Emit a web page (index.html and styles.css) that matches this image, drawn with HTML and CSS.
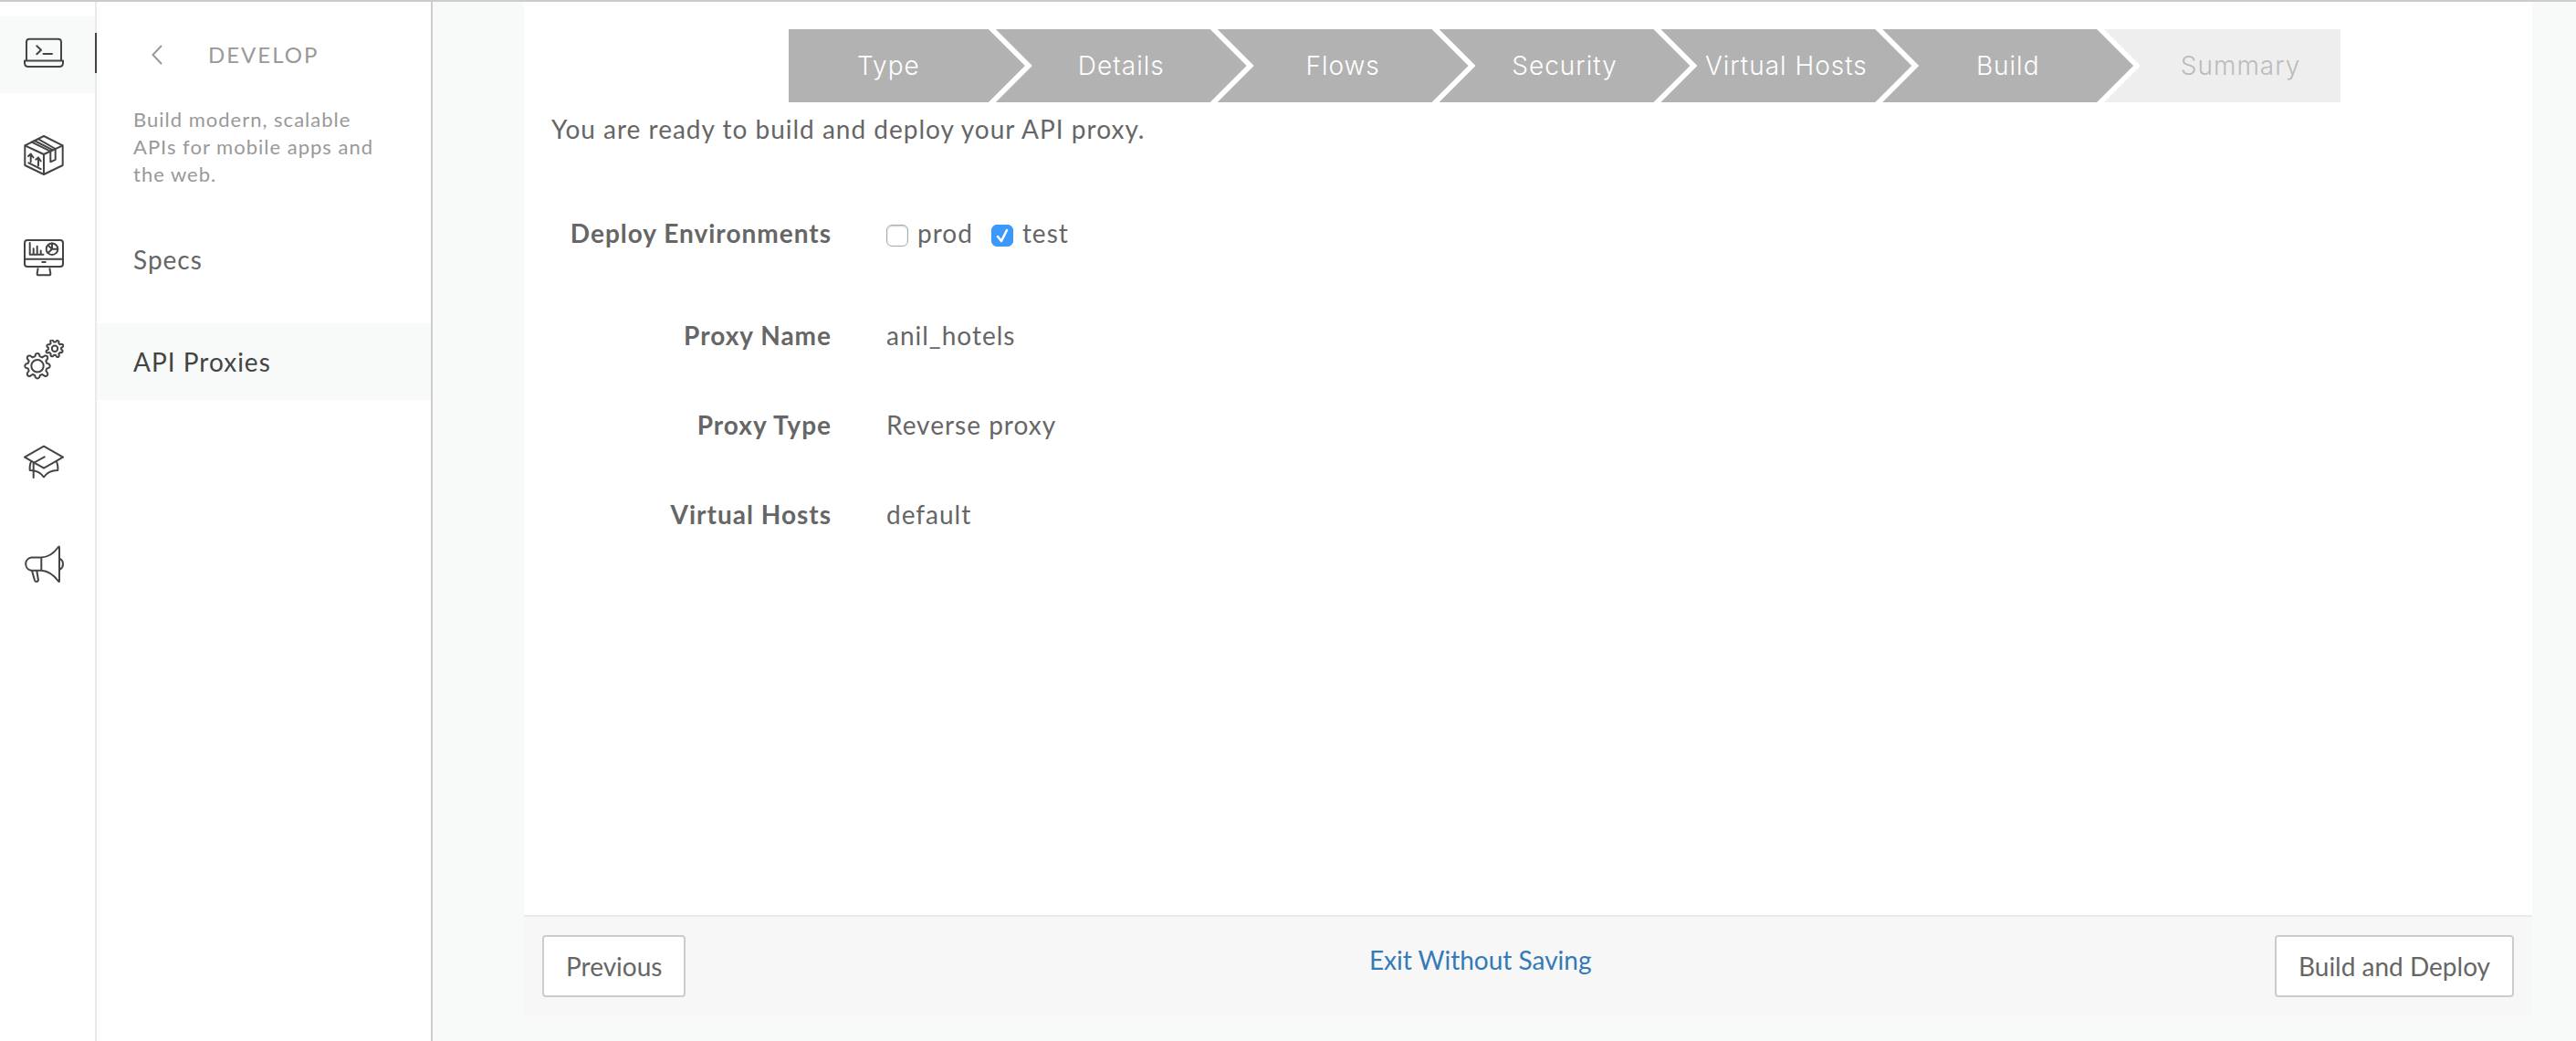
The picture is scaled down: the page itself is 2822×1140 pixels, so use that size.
FILE: index.html
```html
<!DOCTYPE html>
<html lang="en">
<head>
<meta charset="utf-8">
<meta name="viewport" content="width=device-width, initial-scale=1">
<title>Build API Proxy</title>
<link rel="stylesheet" href="styles.css">
</head>
<body>
<div class="app">
  <nav class="rail" aria-label="Sections">
    <a class="rail-item is-active" href="#develop" aria-label="Develop">
      <svg class="icon" viewBox="0 0 44 44">
        <path d="M3 30V10q0-3.3 3.300-3.300H37.700q3.300 0 3.300 3.300V30"/>
        <path d="M1 30.500H43V33q0 4-4 4H5q-4 0-4-4z"/>
        <path d="M14.300 14.300L19 18.700L14.300 23.300M21.500 23H31"/>
      </svg>
    </a>
    <a class="rail-item" href="#publish" aria-label="Publish">
      <svg class="icon" viewBox="0 0 44 44">
        <path d="M22 1L42.700 11.300V33L22 43L1.300 33V11.300zM1.300 11.300L22 21L42.700 11.300M22 21V43"/>
        <path d="M8.700 7.600L29.300 17.700V29.300L34.700 26.800V15L15.700 4.200M11.600 6L32 16.300"/>
        <path d="M7.700 29.300V20.700M5 23L7.700 20.500L10.500 24.500M16 33.500V24.500M13.300 26.700L16 24.500L18.700 28.500M5.300 30.300L18.700 37.200"/>
      </svg>
    </a>
    <a class="rail-item" href="#analyze" aria-label="Analyze">
      <svg class="icon" viewBox="0 0 44 44">
        <rect x="1" y="3" width="42" height="29" rx="3"/>
        <path d="M1 23.700H43M20.300 27H23.700M15.500 34.300L14.700 39.500Q14.500 41.300 16 41.300H28Q29.500 41.300 29.300 39.500L28.500 34.300"/>
        <path d="M6.700 6V18.700H21.500M10.700 18V12.300M14.700 18V9.700M18.700 18V14.500"/>
        <circle cx="31" cy="12.700" r="6.300"/>
        <path d="M31 6.500V12.700H37.300M31 12.700L26.500 17M31 12.700L27.500 9.500"/>
      </svg>
    </a>
    <a class="rail-item" href="#admin" aria-label="Admin">
      <svg class="icon" viewBox="0 0 44 44">
        <defs>
          <path id="gear" vector-effect="non-scaling-stroke" d="M-2.800-10.300L-2.200-11.500V-12.500Q-1.800-13.800 0-13.800T2.200-12.500V-11.500L2.800-10.300L5.300-9.300L8.100-11.200Q11.600-11.600 11.200-8.100L9.300-5.300L10.300-2.800L12.500-2.200Q15-.0 12.500 2.200L10.300 2.800L9.300 5.300L11.200 8.100Q11.600 11.600 8.100 11.200L5.300 9.300L2.800 10.300L2.200 12.500Q0 15-2.200 12.500L-2.800 10.300L-5.300 9.300L-8.100 11.200Q-11.600 11.600-11.200 8.100L-9.300 5.300L-10.300 2.800L-12.500 2.200Q-15 0-12.500-2.200L-10.300-2.800L-9.300-5.300L-11.200-8.100Q-11.600-11.600-8.100-11.200L-5.300-9.300z"/>
        </defs>
        <use href="#gear" transform="translate(15 28.700)"/>
        <circle cx="15" cy="28.700" r="6.700"/>
        <use href="#gear" transform="translate(34 9.700) rotate(22.500) scale(.67)"/>
        <circle cx="34" cy="9.700" r="3.200"/>
      </svg>
    </a>
    <a class="rail-item" href="#learn" aria-label="Learn">
      <svg class="icon" viewBox="0 0 44 44">
        <path d="M22 4.700L43 16.700L22 28.700L1 16.700z"/>
        <path d="M22.700 16.300L10.700 23V39"/>
        <path d="M8 21.500Q6.300 26 6.700 31Q17 31 22 38.500Q27 31 37.300 31Q37.700 26 36 21.500"/>
      </svg>
    </a>
    <a class="rail-item" href="#news" aria-label="Announcements">
      <svg class="icon" viewBox="0 0 44 44">
        <path d="M19.300 14.500H8.200A7.200 7.200 0 0 0 8.200 28.700H19.300zM19.300 14.500Q30 14 38 3Q39 2 39 4V39.500Q39 42 38 40.500Q30 29.500 19.300 28.700"/>
        <path d="M40 16Q43 18 43 21.700T40 27.400"/>
        <path d="M9 29L12 39.500Q12.500 41 14 41T16 39.500L14.300 29"/>
      </svg>
    </a>
  </nav>

  <aside class="panel">
    <div class="panel-head">
      <button class="back" type="button" aria-label="Back">
        <svg viewBox="0 0 12 22"><path d="M10.500 1.500L1.500 11L10.500 20.500"/></svg>
      </button>
      <h2 class="panel-title">DEVELOP</h2>
    </div>
    <p class="panel-text">Build modern, scalable APIs for mobile apps and the web.</p>
    <nav class="menu" aria-label="Develop">
      <a class="menu-item" href="#specs">Specs</a>
      <a class="menu-item is-current" href="#proxies">API Proxies</a>
    </nav>
  </aside>

  <main class="content">
    <section class="wizard">
      <ol class="steps">
        <li class="step">Type</li>
        <li class="step">Details</li>
        <li class="step">Flows</li>
        <li class="step">Security</li>
        <li class="step">Virtual Hosts</li>
        <li class="step">Build</li>
        <li class="step is-pending">Summary</li>
      </ol>
      <p class="intro">You are ready to build and deploy your API proxy.</p>
      <div class="field environments" role="group" aria-labelledby="env-label">
        <span class="field-name" id="env-label">Deploy Environments</span>
        <div class="checks">
          <label class="check"><input type="checkbox" name="env" value="prod">prod</label>
          <label class="check"><input type="checkbox" name="env" value="test" checked>test</label>
        </div>
      </div>
      <dl class="summary">
        <div class="field"><dt class="field-name">Proxy Name</dt><dd class="field-value">anil_hotels</dd></div>
        <div class="field"><dt class="field-name">Proxy Type</dt><dd class="field-value">Reverse proxy</dd></div>
        <div class="field"><dt class="field-name">Virtual Hosts</dt><dd class="field-value">default</dd></div>
      </dl>
    </section>
    <footer class="actions">
      <button class="button" type="button">Previous</button>
      <a class="exit" href="#exit">Exit Without Saving</a>
      <button class="button" type="button">Build and Deploy</button>
    </footer>
  </main>
</div>
</body>
</html>
```

FILE: styles.css
```css
* {
  box-sizing: border-box;
}

body {
  margin: 0;
  background: #f8faf9;
  color: #666;
  font: 28px/40px Lato, "Liberation Sans", sans-serif;
  letter-spacing: 1px;
}

a {
  color: inherit;
  text-decoration: none;
}

.app {
  display: flex;
  min-height: 100vh;
  border-top: 2px solid #ccc;
}

/* Icon rail */
.rail {
  display: flex;
  flex: none;
  flex-direction: column;
  gap: 28px;
  width: 106px;
  padding-top: 16px;
  border-right: 2px solid #e9eaea;
  background: #fff;
}

.rail-item {
  position: relative;
  height: 84px;
  padding: 18px 26px;
}

.rail-item.is-active {
  background: #f8faf9;
}

.rail-item.is-active::after {
  content: "";
  position: absolute;
  top: 18px;
  right: -2px;
  width: 2px;
  height: 44px;
  background: #444;
}

.icon {
  display: block;
  width: 44px;
  height: 44px;
  fill: none;
  stroke: #444;
  stroke-width: 2;
  stroke-linecap: round;
  stroke-linejoin: round;
}

/* Section panel */
.panel {
  flex: none;
  width: 368px;
  border-right: 2px solid #ccc;
  background: #fff;
}

.panel-head {
  display: flex;
  align-items: center;
  gap: 50px;
  padding: 38px 40px 0 60px;
  color: #999;
}

.back {
  width: 12px;
  height: 40px;
  padding: 0;
  border: 0;
  background: none;
}

.back svg {
  display: block;
  width: 12px;
  height: 22px;
  fill: none;
  stroke: #999;
  stroke-width: 2;
  stroke-linecap: round;
}

.panel-title {
  margin: 0;
  font-size: 24px;
  font-weight: 400;
  letter-spacing: 2px;
}

.panel-text {
  margin: 36px 40px 0;
  color: #999;
  font-size: 22px;
  line-height: 30px;
}

.menu {
  display: flex;
  flex-direction: column;
  gap: 28px;
  margin-top: 36px;
}

.menu-item {
  padding: 0 40px;
  line-height: 84px;
}

.menu-item.is-current {
  background: #f8faf9;
  color: #444;
}

/* Wizard */
.content {
  display: flex;
  flex: 1;
  flex-direction: column;
  min-width: 0;
  padding: 0 48px 28px 100px;
}

.wizard {
  flex: 1;
  padding: 30px 30px 0;
  background: #fff;
}

.steps {
  display: grid;
  grid-template-columns: repeat(7, 1fr);
  margin: 0 180px 0 260px;
  padding: 0;
  list-style: none;
}

.step {
  margin: 0 -16px;
  background: #b2b2b2;
  clip-path: polygon(0 0, calc(100% - 40px) 0, 100% 50%, calc(100% - 40px) 100%, 0 100%, 40px 50%);
  color: #fff;
  font-family: Inter, "Liberation Sans", sans-serif;
  font-weight: 300;
  line-height: 80px;
  text-align: center;
  white-space: nowrap;
}

.step:first-child {
  margin-left: 0;
  padding-right: 40px;
  clip-path: polygon(0 0, calc(100% - 40px) 0, 100% 50%, calc(100% - 40px) 100%, 0 100%);
}

.step:last-child {
  margin-right: 0;
  padding-left: 40px;
  clip-path: polygon(0 0, 100% 0, 100% 100%, 0 100%, 40px 50%);
}

.step.is-pending {
  background: #eee;
  color: #bbb;
}

.intro {
  margin: 9px 0 0;
}

.field {
  display: grid;
  grid-template-columns: 307px 1fr;
  gap: 60px;
}

.environments {
  margin-top: 74px;
}

.field-name {
  font-weight: 700;
  text-align: right;
}

.field-value {
  margin: 0;
}

.checks {
  display: flex;
  gap: 20px;
}

.check {
  display: flex;
  align-items: center;
  gap: 10px;
}

.check input {
  appearance: none;
  width: 24px;
  height: 24px;
  margin: 6px 0 0;
  border: 1px solid #aaa;
  border-radius: 6px;
  background: #fff;
  box-shadow: inset 0 1px 2px #ccc;
}

.check input:checked {
  border-color: #3b99fc;
  background: #3b99fc url("data:image/svg+xml,%3Csvg xmlns='http://www.w3.org/2000/svg' viewBox='0 0 20 20'%3E%3Cpath d='M5 11l4 5 6-12' fill='none' stroke='%23fff' stroke-width='2.500' stroke-linecap='round' stroke-linejoin='round'/%3E%3C/svg%3E") center / 20px 20px no-repeat;
  box-shadow: none;
}

.summary {
  display: flex;
  flex-direction: column;
  gap: 58px;
  margin: 72px 0 0;
}

/* Footer actions */
.actions {
  display: flex;
  align-items: flex-start;
  justify-content: space-between;
  padding: 20px;
  border-top: 2px solid #e9eaea;
  background: #f7f7f7;
  letter-spacing: 0;
}

.button {
  height: 68px;
  padding: 0 24px;
  border: 2px solid #ccc;
  border-radius: 4px;
  background: #fff;
  color: #666;
  font: inherit;
}

.exit {
  color: #337ab7;
  line-height: 54px;
}
```
